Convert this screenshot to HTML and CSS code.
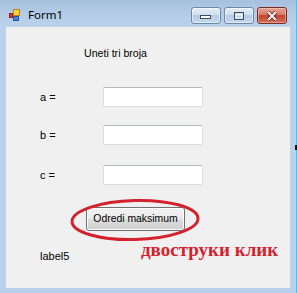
FILE: index.html
```html
<!DOCTYPE html>
<html>
<head>
<meta charset="utf-8">
<link rel="stylesheet" href="styles.css">
</head>
<body>
<div class="window">
  <div class="titlebar">
    <svg class="app-icon" width="12" height="12" viewBox="0 0 12 12">
      <rect x="4.5" y="0.5" width="6" height="6" fill="#f7d43a" stroke="#b98a1a"/>
      <rect x="0.5" y="4.5" width="3" height="4" fill="#e03a2a" stroke="#962016"/>
      <rect x="4.5" y="7.5" width="5" height="4" fill="#4a86d8" stroke="#2a5298"/>
    </svg>
    <span class="title">Form1</span>
    <div class="caption-buttons">
      <div class="cbtn">
        <svg width="14" height="8" viewBox="0 0 14 8"><rect x="1.5" y="3.5" width="10" height="3" fill="#fff" stroke="#3a4a60"/></svg>
      </div>
      <div class="cbtn">
        <svg width="14" height="10" viewBox="0 0 14 10"><rect x="2.5" y="1.5" width="9" height="7" fill="none" stroke="#3a4a60"/><rect x="4" y="4" width="6" height="3" fill="none" stroke="#fff"/></svg>
      </div>
      <div class="cbtn close">
        <svg width="14" height="10" viewBox="0 0 14 10"><path d="M3 1 L11 9 M11 1 L3 9" stroke="#5a2020" stroke-width="3.4"/><path d="M3 1 L11 9 M11 1 L3 9" stroke="#fff" stroke-width="1.8"/></svg>
      </div>
    </div>
  </div>
  <div class="client">
    <div class="heading">Uneti tri broja</div>
    <div class="field row-a"><span class="lbl">a =</span><div class="textbox"></div></div>
    <div class="field row-b"><span class="lbl">b =</span><div class="textbox"></div></div>
    <div class="field row-c"><span class="lbl">c =</span><div class="textbox"></div></div>
    <div class="btn-row"><div class="button">Odredi maksimum</div></div>
    <div class="label5">label5</div>
    <svg class="ellipse" width="134" height="46" viewBox="0 0 134 46">
      <ellipse cx="66" cy="23" rx="63" ry="19.5" fill="none" stroke="#d3222e" stroke-width="3" transform="rotate(-1.5 66 23)"/>
    </svg>
    <div class="note">двоструки клик</div>
  </div>
  <span class="mark"></span>
</div>
</body>
</html>
```
FILE: styles.css
```css
* { box-sizing: border-box; }
html, body { margin: 0; padding: 0; }
body { width: 297px; height: 293px; overflow: hidden; background: #b9d1ea; }

.window {
  position: relative;
  width: 297px;
  height: 293px;
  background: #b9d1ea;
  border-right: 1px solid #45c2ee;
  display: flex;
  flex-direction: column;
}

.titlebar {
  height: 27px;
  display: flex;
  align-items: center;
  padding-left: 9px;
  background: linear-gradient(#a6c0dd, #b6cde7 60%, #bad2ea);
}
.app-icon { margin-top: 2px; }
.title {
  margin-left: 7px;
  font-family: "Noto Sans", sans-serif;
  font-size: 11.5px;
  color: #000;
  margin-top: 1px;
}
.caption-buttons {
  margin-left: auto;
  margin-right: 9px;
  display: flex;
  gap: 3px;
  align-self: flex-start;
  margin-top: 7px;
}
.cbtn {
  width: 30px;
  height: 17px;
  border: 1px solid #6d87a8;
  border-radius: 3px;
  background: linear-gradient(#e4edf7, #cfdeee 45%, #b6cce4 50%, #c5d8ec);
  box-shadow: inset 0 0 0 1px rgba(255,255,255,0.55);
  display: flex;
  align-items: center;
  justify-content: center;
}
.cbtn.close {
  border-color: #7a2a24;
  background: linear-gradient(#e8a496, #d47a68 45%, #c2442e 50%, #d2705a);
  box-shadow: inset 0 0 0 1px rgba(255,210,200,0.5);
}

.client {
  position: relative;
  margin: 0 6px 5px 6px;
  flex: 1;
  background: #f0f0f0;
  font-family: "Liberation Sans", Arial, sans-serif;
  font-size: 11px;
  color: #000;
  padding-left: 34px;
  padding-top: 20px;
}
.heading {
  margin-left: 44px;
  line-height: 13px;
  height: 13px;
  font-size: 10.6px;
}
.field {
  display: grid;
  grid-template-columns: 63px 100px;
  align-items: center;
  height: 20px;
}
.row-a { margin-top: 27px; }
.row-b { margin-top: 18px; }
.row-c { margin-top: 20px; }
.lbl { line-height: 13px; }
.textbox {
  height: 20px;
  background: #fff;
  border: 1px solid #dadde3;
  border-top-color: #b4b8bf;
  border-radius: 2px;
}
.btn-row {
  margin-top: 22px;
  padding-left: 46px;
}
.button {
  width: 99px;
  height: 24px;
  border: 1px solid #707070;
  border-radius: 3px;
  background: linear-gradient(#f2f2f2, #ebebeb 50%, #dddddd 50%, #cfcfcf);
  box-shadow: inset 0 0 0 1px #fcfcfc;
  font-size: 10.4px;
  line-height: 22px;
  text-align: center;
}
.label5 {
  margin-top: 19px;
  line-height: 13px;
}
.ellipse {
  position: absolute;
  left: 63px;
  top: 170px;
}
.note {
  position: absolute;
  left: 135px;
  top: 212px;
  font-family: "Liberation Serif", "Times New Roman", serif;
  font-weight: bold;
  font-size: 19px;
  color: #d3222e;
  white-space: nowrap;
}
.mark {
  position: absolute;
  right: -1px;
  top: 145px;
  width: 2px;
  height: 5px;
  background: #111;
}
```
